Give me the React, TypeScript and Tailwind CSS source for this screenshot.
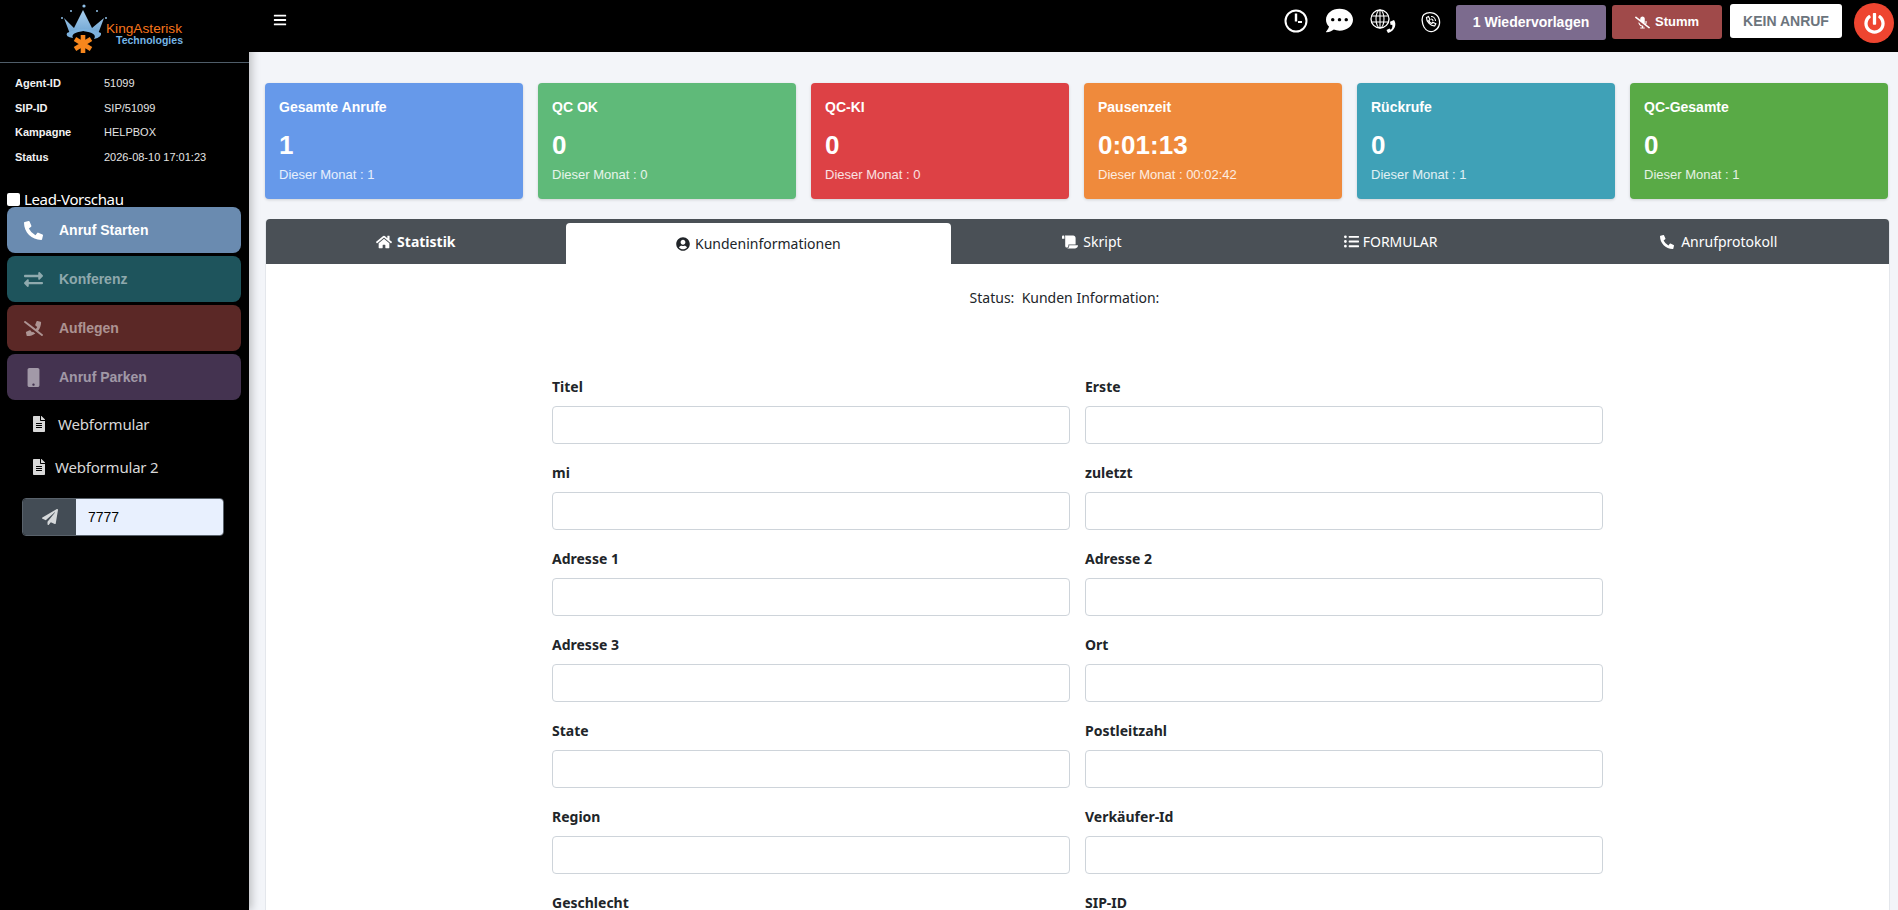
import React from "react";
import { FaPhoneAlt, FaExchangeAlt, FaPhoneSlash, FaMobile, FaFileAlt, FaPaperPlane, FaHome, FaUserCircle, FaScroll, FaListUl, FaBars, FaMicrophoneSlash, FaPowerOff, FaCommentDots } from "react-icons/fa";

const sans = "font-['Liberation_Sans',Arial,sans-serif]";

const info: [string, string][] = [
  ["Agent-ID", "51099"],
  ["SIP-ID", "SIP/51099"],
  ["Kampagne", "HELPBOX"],
  ["Status", "2026-08-10 17:01:23"],
];

const cards = [
  { t: "Gesamte Anrufe", v: "1", s: "Dieser Monat : 1", c: "bg-[#6699ea]" },
  { t: "QC OK", v: "0", s: "Dieser Monat : 0", c: "bg-[#5fba79]" },
  { t: "QC-KI", v: "0", s: "Dieser Monat : 0", c: "bg-[#dd4145]" },
  { t: "Pausenzeit", v: "0:01:13", s: "Dieser Monat : 00:02:42", c: "bg-[#ef8a3c]" },
  { t: "Rückrufe", v: "0", s: "Dieser Monat : 1", c: "bg-[#3fa1b7]" },
  { t: "QC-Gesamte", v: "0", s: "Dieser Monat : 1", c: "bg-[#59aa46]" },
];

const fields = ["Titel", "Erste", "mi", "zuletzt", "Adresse 1", "Adresse 2", "Adresse 3", "Ort", "State", "Postleitzahl", "Region", "Verkäufer-Id", "Geschlecht", "SIP-ID"];

function Logo() {
  return (
    <svg width="150" height="60" viewBox="0 0 150 60" className="block">
      <defs>
        <linearGradient id="cr" x1="0" y1="0" x2="0" y2="1">
          <stop offset="0" stopColor="#a9cfee" />
          <stop offset="1" stopColor="#6ea4d2" />
        </linearGradient>
      </defs>
      <path d="M14 18 L24 28 L33 10 L42 28 L54 18 L48 34 Q33 28 20 34 Z" fill="url(#cr)" />
      <circle cx="34" cy="6" r="1.6" fill="#8fc0e8" />
      <circle cx="21" cy="11" r="1" fill="#8fc0e8" />
      <circle cx="47" cy="11" r="1" fill="#8fc0e8" />
      <circle cx="12" cy="18" r="1" fill="#8fc0e8" />
      <circle cx="56" cy="18" r="1" fill="#8fc0e8" />
      <path d="M17 33 Q33 25 51 33 Q52 37 44 39 Q48 33 33 31 Q20 33 23 38 Q15 37 17 33 Z" fill="#7db2de" />
      <path d="M33 35 v18 M25 39 l16 10 M41 39 l-16 10" stroke="#f7861c" strokeWidth="4.6" />
      <text x="56" y="33" fontFamily="'Liberation Sans',sans-serif" fontSize="13.5" fill="#f7751c" textLength="76" lengthAdjust="spacingAndGlyphs">KingAsterisk</text>
      <text x="66" y="44" fontFamily="'Liberation Sans',sans-serif" fontSize="11" fontWeight="700" fill="#74b5e6" textLength="67" lengthAdjust="spacingAndGlyphs">Technologies</text>
    </svg>
  );
}

function SideBtn({ icon, label, bg, dim }: { icon: React.ReactNode; label: string; bg: string; dim?: boolean }) {
  return (
    <button className={`h-[46px] w-[234px] rounded-[8px] flex items-center ${bg} ${dim ? "text-white/50" : "text-white"}`}>
      <span className="w-[45px] pl-[7px] flex justify-center text-[19px]">{icon}</span>
      <span className={`${sans} ml-[7px] font-bold text-[14px]`}>{label}</span>
    </button>
  );
}

function ClockIcon() {
  return (
    <svg width="24" height="24" viewBox="0 0 24 24" fill="none" stroke="#fff" strokeWidth="2">
      <circle cx="12" cy="12" r="10.5" />
      <path d="M12 4.5v8" strokeWidth="2.4" />
      <path d="M14 13h4" strokeWidth="2" />
    </svg>
  );
}

function GlobePhone() {
  return (
    <svg width="30" height="26" viewBox="0 0 30 26" fill="none" stroke="#fff">
      <circle cx="10" cy="10" r="9" strokeWidth="1.3" />
      <ellipse cx="10" cy="10" rx="4" ry="9" strokeWidth="1.1" />
      <path d="M1.5 7h17M1.5 13h17M10 1v18" strokeWidth="1.1" />
      <path d="M24 11c3 4 1 11-6 13l-1.5-3 3-1.5 1.2 1.2c1.5-1.2 2-3.4 1.5-5l-1.6.2-.6-3.2z" fill="#fff" stroke="none" />
    </svg>
  );
}

function RingPhone() {
  return (
    <svg width="22" height="22" viewBox="0 0 22 22" fill="none" stroke="#fff" strokeWidth="1.3">
      <path d="M5 3.5C9 .5 17 1 19.5 6.5 22 12 20 18 15 20c-4 1.5-8-.5-10-4C3 12 2 6 5 3.5z" />
      <path d="M7.5 6.5l2-1 1.5 3-1.2 1c.5 1.5 1.5 2.5 3 3l1-1.2 3 1.5-1 2c-4 .5-8.5-4-8.3-8.3z" strokeWidth="1.2" />
      <path d="M12 5.5c2.5 0 4.5 2 4.5 4.5M12 8c1.2 0 2 .8 2 2" strokeWidth="1.1" />
    </svg>
  );
}

export default function App() {
  return (
    <div className="flex h-screen w-full overflow-hidden bg-[#f3f5f9] font-['Noto_Sans',sans-serif]">
      <aside className="relative z-10 w-[249px] shrink-0 bg-black text-white shadow-[3px_0_8px_rgba(0,0,0,0.22)]">
        <div className="h-[63px] border-b border-[#4f5d69] pl-[50px]">
          <Logo />
        </div>
        <div className="pl-[15px] pt-[8px] h-[117px]">
          {info.map(([k, v]) => (
            <div key={k} className={`flex h-[24.6px] items-center text-[11px] ${sans}`}>
              <span className="w-[89px] font-bold text-[#f2f2f2]">{k}</span>
              <span className="text-[#e4e4e4]">{v}</span>
            </div>
          ))}
        </div>
        <label className="flex items-center h-[23px] pl-[7px] mt-[8px] text-[15px] text-white">
          <span className="w-[13px] h-[13px] bg-white rounded-[2px] mr-[4px]" />
          <span className="tracking-[-0.35px]">Lead-Vorschau</span>
        </label>
        <div className="pl-[7px] flex flex-col gap-[3px] mt-[-4px]">
          <SideBtn icon={<FaPhoneAlt />} label="Anruf Starten" bg="bg-[#6a8bb0]" />
          <SideBtn icon={<FaExchangeAlt />} label="Konferenz" bg="bg-[#1e545c]" dim />
          <SideBtn icon={<FaPhoneSlash />} label="Auflegen" bg="bg-[#5b2826]" dim />
          <SideBtn icon={<FaMobile />} label="Anruf Parken" bg="bg-[#443350]" dim />
        </div>
        <div className="flex items-center h-[24px] mt-[12px] pl-[31px] text-[#d8d8d8]">
          <FaFileAlt className="text-[16px]" />
          <span className="ml-[11px] text-[15px] tracking-[-0.2px]">Webformular</span>
        </div>
        <div className="flex items-center h-[24px] mt-[19px] pl-[31px] text-[#d8d8d8]">
          <FaFileAlt className="text-[16px]" />
          <span className="ml-[8px] text-[15px] tracking-[-0.2px]">Webformular 2</span>
        </div>
        <div className="flex ml-[22px] mt-[19px] w-[202px] h-[38px] rounded-[4px] overflow-hidden border border-[#59626b]">
          <span className="w-[53px] bg-[#434c55] flex items-center justify-center text-[#d5d8da] text-[16px]">
            <FaPaperPlane />
          </span>
          <span className={`flex-1 bg-[#e8f0fe] text-black text-[14px] pl-[12px] flex items-center ${sans}`}>7777</span>
        </div>
      </aside>

      <div className="flex-1 min-w-0 flex flex-col">
        <header className="h-[52px] shrink-0 bg-black flex items-start text-white">
          <FaBars className="ml-[24px] mt-[13px] text-[14px]" />
          <div className="ml-auto flex items-start">
            <span className="mt-[9px]"><ClockIcon /></span>
            <FaCommentDots className="ml-[18px] mt-[7px] text-[27px]" />
            <span className="ml-[17px] mt-[9px]"><GlobePhone /></span>
            <span className="ml-[19px] mt-[11px]"><RingPhone /></span>
            <span className={`${sans} ml-[15px] mt-[5px] h-[35px] w-[150px] rounded-[3px] bg-[#7c6b8e] flex items-center justify-center font-bold text-[14px]`}>1 Wiedervorlagen</span>
            <span className={`${sans} ml-[6px] mt-[5px] h-[34px] w-[110px] rounded-[3px] bg-[#a04a4a] flex items-center justify-center font-bold text-[13px]`}>
              <FaMicrophoneSlash className="mr-[5px] text-[15px]" />Stumm
            </span>
            <span className={`${sans} ml-[8px] mt-[4px] h-[34px] w-[112px] rounded-[3px] bg-white flex items-center justify-center font-bold text-[14px] text-[#6c757d]`}>KEIN ANRUF</span>
            <span className="ml-[12px] mr-[4px] mt-[3px] h-[40px] w-[40px] rounded-full bg-[#ee4530] flex items-center justify-center text-[21px]">
              <FaPowerOff />
            </span>
          </div>
        </header>

        <main className="flex-1 min-h-0 overflow-hidden pl-[16px] pr-[8px]">
          <div className="mt-[31px] flex gap-[15px]">
            {cards.map((c) => (
              <div key={c.t} className={`${c.c} ${sans} w-[258px] h-[116px] rounded-[4px] px-[14px] pt-[15px] text-white shadow-[0_1px_3px_rgba(0,0,0,0.15)]`}>
                <div className="font-bold text-[14px] leading-[18px]">{c.t}</div>
                <div className="mt-[13px] font-bold text-[26px] leading-[32px]">{c.v}</div>
                <div className="mt-[5px] text-[13px] leading-[18px] text-white/85">{c.s}</div>
              </div>
            ))}
          </div>

          <section className="mt-[20px] bg-white border-x border-[#e4e7ec] rounded-t-[4px] w-[1625px] h-[700px]">
            <div className="flex h-[45px] bg-[#4a5056] rounded-t-[4px] text-white text-[14px]">
              <div className="w-[300px] flex items-center justify-center font-bold gap-[5px]">
                <FaHome className="text-[16px]" />Statistik
              </div>
              <div className="w-[386px] mt-[4px] bg-white rounded-t-[4px] text-[#212529] flex items-center justify-center gap-[5px]">
                <FaUserCircle className="text-[14px]" />Kundeninformationen
              </div>
              <div className="w-[282px] flex items-center justify-center gap-[5px]">
                <FaScroll className="text-[16px]" />Skript
              </div>
              <div className="w-[316px] flex items-center justify-center gap-[4px]">
                <FaListUl className="text-[15px]" />FORMULAR
              </div>
              <div className="w-[341px] flex items-center justify-center gap-[7px]">
                <FaPhoneAlt className="text-[14px]" />Anrufprotokoll
              </div>
            </div>
            <div className="pt-[24px] h-[111px] pr-[26px] text-center text-[14px] leading-[20px] text-[#212529] whitespace-pre">Status:  Kunden Information:</div>
            <div className="mx-auto w-[1051px] grid grid-cols-2 gap-x-[15px]">
              {fields.map((f) => (
                <div key={f} className="h-[86px]">
                  <div className="h-[24px] leading-[24px] text-[14px] font-bold text-[#212529]">{f}</div>
                  <input className="mt-[7px] block w-full h-[38px] bg-white border border-[#ced4da] rounded-[4px]" />
                </div>
              ))}
            </div>
          </section>
        </main>
      </div>
    </div>
  );
}
